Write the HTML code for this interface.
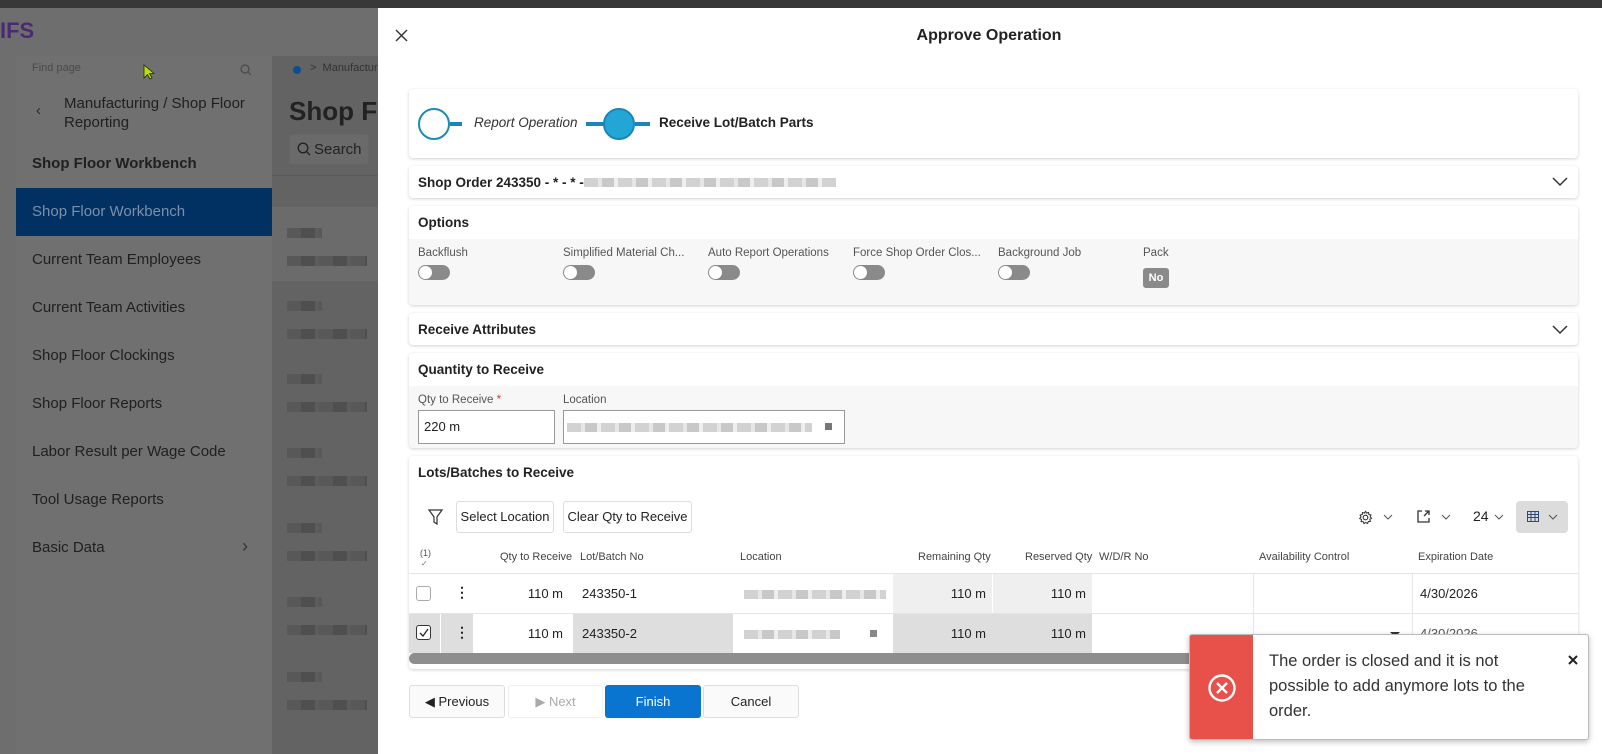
<!DOCTYPE html>
<html><head><meta charset="utf-8"><style>
*{box-sizing:border-box;margin:0;padding:0}
body{width:1602px;height:754px;overflow:hidden;position:relative;font-family:"Liberation Sans",sans-serif;color:#222;background:#6b6b6b}
.a{position:absolute}
.t{position:absolute;white-space:nowrap}
.card{position:absolute;left:409px;width:1169px;background:#fff;border-radius:4px;box-shadow:0 1px 3px rgba(0,0,0,.18)}
.h{font-size:13.5px;font-weight:bold;color:#222}
.lbl{font-size:11.5px;color:#555}
.tog{position:absolute;width:32px;height:15px;border-radius:8px;background:#8a8a8a}
.tog:after{content:"";position:absolute;left:1px;top:1px;width:13px;height:13px;border-radius:50%;background:#fff}
.btn{position:absolute;border:1px solid #ddd;border-radius:3px;background:#fff;font-size:13px;text-align:center;color:#222}
.side{font-size:15px;color:#202020}
.blur{position:absolute;height:9px;background:repeating-linear-gradient(90deg,#d2d2d2 0 14px,#e6e6e6 14px 18px,#c8c8c8 18px 30px,#eee 30px 34px)}
.blurd{position:absolute;height:10px;background:repeating-linear-gradient(90deg,#585858 0 14px,#4f4f4f 14px 28px,#5c5c5c 28px 32px)}
.th{position:absolute;top:551px;font-size:11px;color:#444}
.cell{position:absolute;font-size:13px;color:#222}
</style></head><body>
<div class="a" style="left:0;top:0;width:1602px;height:8px;background:#383838"></div>
<div class="a" style="left:0;top:8px;width:378px;height:746px;background:#6e6e6e"></div>
<div class="t" style="left:0;top:18px;font-size:22px;font-weight:bold;color:#4b2a73">IFS</div>
<div class="a" style="left:16px;top:56px;width:256px;height:698px;background:#707070"></div>
<div class="a" style="left:272px;top:56px;width:106px;height:698px;background:#636363"></div>
<div class="a" style="left:272px;top:175px;width:106px;height:1px;background:#5a5a5a"></div>
<div class="a" style="left:272px;top:207px;width:106px;height:74px;background:#6b6b6b"></div>
<div class="t" style="left:32px;top:62px;font-size:11px;color:#4a4a4a">Find page</div>
<svg class="a" style="left:240px;top:64px" width="12" height="12"><circle cx="5" cy="5" r="4" fill="none" stroke="#4a4a4a" stroke-width="1.2"/><path d="M8 8L11 11" stroke="#4a4a4a" stroke-width="1.2"/></svg>
<svg class="a" style="left:143px;top:64px" width="12" height="16"><path d="M1 1V14L4.5 10.5L7 15L9 14L6.5 9.5H11Z" fill="#bde000" stroke="#222" stroke-width="0.8"/></svg>
<div class="a" style="left:293px;top:66px;width:8px;height:8px;border-radius:50%;background:#0b4f91"></div>
<div class="t" style="left:310px;top:62px;font-size:11px;color:#333">&gt;&nbsp; Manufacturing</div>
<div class="t" style="left:36px;top:102px;font-size:15px;color:#2a2a2a">&lsaquo;</div>
<div class="t side" style="left:64px;top:94px;line-height:19px">Manufacturing / Shop Floor<br>Reporting</div>
<div class="t" style="left:289px;top:96px;font-size:26px;font-weight:bold;color:#222">Shop Fl</div>
<div class="a" style="left:289px;top:134px;width:80px;height:31px;border:1px solid #666;border-radius:3px;background:#6a6a6a"></div>
<svg class="a" style="left:297px;top:142px" width="14" height="14"><circle cx="6" cy="6" r="4.8" fill="none" stroke="#222" stroke-width="1.3"/><path d="M9.5 9.5L13 13" stroke="#222" stroke-width="1.3"/></svg>
<div class="t" style="left:314px;top:141px;font-size:15px;color:#222">Search</div>
<div class="t side" style="left:32px;top:155px;font-weight:bold">Shop Floor Workbench</div>
<div class="a" style="left:16px;top:188px;width:256px;height:48px;background:#003162"></div>
<div class="t side" style="left:32px;top:203px;color:#7d8fa8">Shop Floor Workbench</div>
<div class="t side" style="left:32px;top:251px">Current Team Employees</div>
<div class="t side" style="left:32px;top:299px">Current Team Activities</div>
<div class="t side" style="left:32px;top:347px">Shop Floor Clockings</div>
<div class="t side" style="left:32px;top:395px">Shop Floor Reports</div>
<div class="t side" style="left:32px;top:443px">Labor Result per Wage Code</div>
<div class="t side" style="left:32px;top:491px">Tool Usage Reports</div>
<div class="t side" style="left:32px;top:539px">Basic Data</div>
<div class="t" style="left:242px;top:536px;font-size:18px;color:#333">&rsaquo;</div>
<div class="blurd" style="left:287px;top:228px;width:35px"></div><div class="blurd" style="left:287px;top:256px;width:80px"></div>
<div class="blurd" style="left:287px;top:301px;width:35px"></div><div class="blurd" style="left:287px;top:329px;width:80px"></div>
<div class="blurd" style="left:287px;top:374px;width:35px"></div><div class="blurd" style="left:287px;top:402px;width:80px"></div>
<div class="blurd" style="left:287px;top:448px;width:35px"></div><div class="blurd" style="left:287px;top:476px;width:80px"></div>
<div class="blurd" style="left:287px;top:523px;width:35px"></div><div class="blurd" style="left:287px;top:551px;width:80px"></div>
<div class="blurd" style="left:287px;top:597px;width:35px"></div><div class="blurd" style="left:287px;top:625px;width:80px"></div>
<div class="blurd" style="left:287px;top:672px;width:35px"></div><div class="blurd" style="left:287px;top:700px;width:80px"></div>

<div class="a" style="left:378px;top:8px;width:1224px;height:746px;background:#fff"></div>
<svg class="a" style="left:395px;top:29px" width="13" height="13"><path d="M1 1L12 12M12 1L1 12" stroke="#333" stroke-width="1.4"/></svg>
<div class="t" style="left:889px;top:27px;width:200px;text-align:center;font-size:16px;font-weight:bold">Approve Operation</div>

<div class="card" style="top:89px;height:69px"></div>
<div class="a" style="left:418px;top:108px;width:32px;height:32px;border-radius:50%;border:2px solid #1a8bb9;background:#fff"></div>
<div class="a" style="left:450px;top:122px;width:12px;height:4px;background:#1a86b8"></div>
<div class="t" style="left:474px;top:115px;font-size:13.5px;font-style:italic;color:#333">Report Operation</div>
<div class="a" style="left:586px;top:122px;width:18px;height:4px;background:#1a86b8"></div>
<div class="a" style="left:603px;top:108px;width:32px;height:32px;border-radius:50%;border:2px solid #1a86b8;background:#22a6d6"></div>
<div class="a" style="left:635px;top:122px;width:15px;height:4px;background:#1a86b8"></div>
<div class="t" style="left:659px;top:115px;font-size:13.5px;font-weight:bold;color:#222">Receive Lot/Batch Parts</div>

<div class="card" style="top:166px;height:32px"></div>
<div class="t h" style="left:418px;top:175px">Shop Order 243350 - * - * -</div>
<div class="blur" style="left:584px;top:178px;width:252px"></div>
<svg class="a" style="left:1552px;top:177px" width="16" height="10"><path d="M1 1L8 8L15 1" fill="none" stroke="#333" stroke-width="1.5"/></svg>

<div class="card" style="top:206px;height:99px;overflow:hidden"><div class="a" style="left:0;top:33px;width:1169px;height:66px;background:#f7f7f7"></div></div>
<div class="t h" style="left:418px;top:215px">Options</div>
<div class="t lbl" style="left:418px;top:247px">Backflush</div>
<div class="t lbl" style="left:563px;top:247px">Simplified Material Ch...</div>
<div class="t lbl" style="left:708px;top:247px">Auto Report Operations</div>
<div class="t lbl" style="left:853px;top:247px">Force Shop Order Clos...</div>
<div class="t lbl" style="left:998px;top:247px">Background Job</div>
<div class="t lbl" style="left:1143px;top:247px">Pack</div>
<div class="tog" style="left:418px;top:265px"></div>
<div class="tog" style="left:563px;top:265px"></div>
<div class="tog" style="left:708px;top:265px"></div>
<div class="tog" style="left:853px;top:265px"></div>
<div class="tog" style="left:998px;top:265px"></div>
<div class="a" style="left:1143px;top:268px;width:26px;height:20px;border-radius:3px;background:#8a8a8a;color:#fff;font-size:11px;font-weight:bold;text-align:center;line-height:20px">No</div>

<div class="card" style="top:313px;height:32px"></div>
<div class="t h" style="left:418px;top:322px">Receive Attributes</div>
<svg class="a" style="left:1552px;top:325px" width="16" height="10"><path d="M1 1L8 8L15 1" fill="none" stroke="#333" stroke-width="1.5"/></svg>

<div class="card" style="top:353px;height:95px;overflow:hidden"><div class="a" style="left:0;top:33px;width:1169px;height:62px;background:#f7f7f7"></div></div>
<div class="t h" style="left:418px;top:362px">Quantity to Receive</div>
<div class="t lbl" style="left:418px;top:394px">Qty to Receive <span style="color:#d33">*</span></div>
<div class="t lbl" style="left:563px;top:394px">Location</div>
<div class="a" style="left:418px;top:410px;width:137px;height:34px;border:1px solid #999;background:#fff"></div>
<div class="t" style="left:424px;top:419px;font-size:13px">220 m</div>
<div class="a" style="left:563px;top:410px;width:282px;height:34px;border:1px solid #999;background:#fff"></div>
<div class="blur" style="left:567px;top:423px;width:245px"></div>
<div class="a" style="left:825px;top:423px;width:7px;height:7px;background:#777"></div>

<div class="card" style="top:456px;height:213px"></div>
<div class="t h" style="left:418px;top:465px">Lots/Batches to Receive</div>
<svg class="a" style="left:428px;top:509px" width="15" height="16"><path d="M1 1H14L9 8V15L6 13V8Z" fill="none" stroke="#333" stroke-width="1.2"/></svg>
<div class="btn" style="left:456px;top:501px;width:98px;height:32px;line-height:30px">Select Location</div>
<div class="btn" style="left:563px;top:501px;width:129px;height:32px;line-height:30px">Clear Qty to Receive</div>
<svg class="a" style="left:1358px;top:510px" width="15" height="15" viewBox="0 0 16 16"><circle cx="8" cy="8" r="2.5" fill="none" stroke="#333" stroke-width="1.2"/><path d="M8 1.5L9.2 3.3L11.3 2.6L11.6 4.8L13.8 5.2L13 7.2L14.5 8.8L12.6 10L13.2 12.2L11 12.3L10.2 14.4L8.3 13.3L6.4 14.5L5.5 12.4L3.3 12.4L3.8 10.2L1.8 9.1L3.2 7.4L2.3 5.3L4.5 4.9L4.7 2.7L6.8 3.3Z" fill="none" stroke="#333" stroke-width="1.1"/></svg>
<svg class="a" style="left:1383px;top:514px" width="10" height="6"><path d="M1 1L5 5L9 1" fill="none" stroke="#555"/></svg>
<svg class="a" style="left:1416px;top:509px" width="15" height="15"><path d="M6 2H2V13H13V9M8 7L13 2M9 2H13V6" fill="none" stroke="#333" stroke-width="1.3"/></svg>
<svg class="a" style="left:1441px;top:514px" width="10" height="6"><path d="M1 1L5 5L9 1" fill="none" stroke="#555"/></svg>
<div class="t" style="left:1473px;top:508px;font-size:14px">24</div>
<svg class="a" style="left:1494px;top:514px" width="10" height="6"><path d="M1 1L5 5L9 1" fill="none" stroke="#555"/></svg>
<div class="a" style="left:1516px;top:501px;width:52px;height:32px;border-radius:4px;background:#dcdcdc"></div>
<svg class="a" style="left:1527px;top:511px" width="12" height="11"><rect x="0.5" y="0.5" width="11" height="10" fill="none" stroke="#2c4a7a"/><path d="M0 3.5H12M0 6.5H12M4 0V11M8 0V11" stroke="#2c4a7a"/></svg>
<svg class="a" style="left:1548px;top:514px" width="10" height="6"><path d="M1 1L5 5L9 1" fill="none" stroke="#555"/></svg>

<div class="t" style="left:420px;top:548px;font-size:9px;color:#555">(1)</div>
<div class="t" style="left:421px;top:559px;font-size:8px;color:#777">✓</div>
<div class="th" style="left:500px">Qty to Receive</div>
<div class="th" style="left:580px">Lot/Batch No</div>
<div class="th" style="left:740px">Location</div>
<div class="th" style="left:918px">Remaining Qty</div>
<div class="th" style="left:1025px">Reserved Qty</div>
<div class="th" style="left:1099px">W/D/R No</div>
<div class="th" style="left:1259px">Availability Control</div>
<div class="th" style="left:1418px">Expiration Date</div>
<div class="a" style="left:409px;top:573px;width:1169px;height:1px;background:#e5e5e5"></div>
<div class="a" style="left:893px;top:574px;width:199px;height:39px;background:#efefef"></div>
<div class="a" style="left:992px;top:574px;width:1px;height:78px;background:#fff"></div>
<div class="a" style="left:1253px;top:574px;width:1px;height:78px;background:#e6e6e6"></div>
<div class="a" style="left:1412px;top:574px;width:1px;height:78px;background:#e6e6e6"></div>
<div class="a" style="left:409px;top:613px;width:1169px;height:1px;background:#e5e5e5"></div>
<div class="a" style="left:416px;top:586px;width:15px;height:15px;border:1px solid #aaa;border-radius:3px;background:#fff"></div>
<div class="t" style="left:455px;top:584px;font-size:14px;font-weight:bold">&#8942;</div>
<div class="cell" style="left:473px;top:586px;width:90px;text-align:right">110 m</div>
<div class="cell" style="left:582px;top:586px">243350-1</div>
<div class="blur" style="left:744px;top:590px;width:142px"></div>
<div class="cell" style="left:893px;top:586px;width:93px;text-align:right">110 m</div>
<div class="cell" style="left:992px;top:586px;width:94px;text-align:right">110 m</div>
<div class="cell" style="left:1420px;top:586px">4/30/2026</div>
<div class="a" style="left:409px;top:614px;width:64px;height:39px;background:#dedede"></div>
<div class="a" style="left:440px;top:614px;width:1px;height:39px;background:#fff"></div>
<div class="a" style="left:573px;top:614px;width:160px;height:39px;background:#dedede"></div>
<div class="a" style="left:893px;top:614px;width:199px;height:39px;background:#dedede"></div>
<div class="a" style="left:416px;top:625px;width:15px;height:15px;border:1.3px solid #333;border-radius:3px;background:#fff"></div>
<svg class="a" style="left:418px;top:627px" width="11" height="11"><path d="M2 6L5 9L10 2" fill="none" stroke="#222" stroke-width="1.3"/></svg>
<div class="t" style="left:455px;top:624px;font-size:14px;font-weight:bold">&#8942;</div>
<div class="cell" style="left:473px;top:626px;width:90px;text-align:right">110 m</div>
<div class="cell" style="left:582px;top:626px">243350-2</div>
<div class="blur" style="left:744px;top:630px;width:96px"></div>
<div class="a" style="left:870px;top:630px;width:7px;height:7px;background:#888"></div>
<div class="cell" style="left:893px;top:626px;width:93px;text-align:right">110 m</div>
<div class="cell" style="left:992px;top:626px;width:94px;text-align:right">110 m</div>
<div class="cell" style="left:1420px;top:626px;color:#555">4/30/2026</div>
<div class="a" style="left:1390px;top:632px;width:0;height:0;border-left:5px solid transparent;border-right:5px solid transparent;border-top:5px solid #333"></div>
<div class="a" style="left:409px;top:653px;width:1169px;height:11px;border-radius:6px;background:#8e8e8e"></div>

<div class="btn" style="left:409px;top:685px;width:96px;height:33px;line-height:31px;background:#fafafa">&#9664;&#xFE0E; Previous</div>
<div class="btn" style="left:508px;top:685px;width:95px;height:33px;line-height:31px;color:#aaa;border-color:#f0f0f0">&#9654;&#xFE0E; Next</div>
<div class="a" style="left:605px;top:685px;width:96px;height:33px;border-radius:3px;background:#0a74d1;color:#fff;font-size:13px;text-align:center;line-height:33px">Finish</div>
<div class="btn" style="left:703px;top:685px;width:96px;height:33px;line-height:31px;background:#fafafa">Cancel</div>

<div class="a" style="left:1189px;top:634px;width:400px;height:106px;background:#fff;border:1px solid #bbb;border-radius:3px;box-shadow:0 2px 6px rgba(0,0,0,.25);overflow:hidden">
 <div class="a" style="left:0;top:0;width:63px;height:106px;background:#e8514a"></div>
 <svg class="a" style="left:17px;top:38px" width="30" height="30"><circle cx="15" cy="15" r="12.5" fill="none" stroke="#fff" stroke-width="2.4"/><path d="M10 10L20 20M20 10L10 20" stroke="#fff" stroke-width="2.4"/></svg>
 <div class="t" style="left:79px;top:14px;font-size:16.5px;line-height:25px;color:#333">The order is closed and it is not<br>possible to add anymore lots to the<br>order.</div>
 <svg class="a" style="left:378px;top:20px" width="10" height="10"><path d="M1 1L9 9M9 1L1 9" stroke="#222" stroke-width="2"/></svg>
</div>
</body></html>
